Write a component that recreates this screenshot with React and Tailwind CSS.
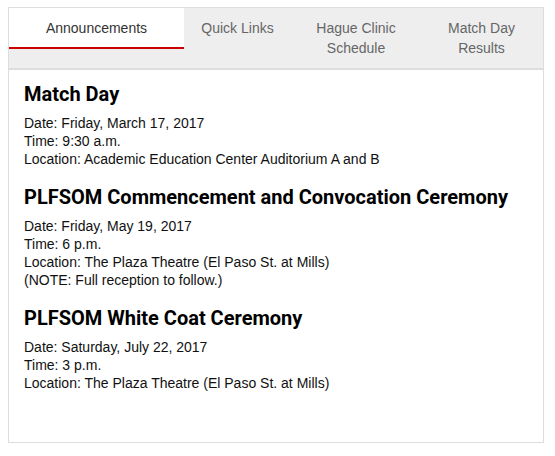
import React from "react";

const sections = [
  {
    title: "Match Day",
    lines: [
      "Date: Friday, March 17, 2017",
      "Time: 9:30 a.m.",
      "Location: Academic Education Center Auditorium A and B",
    ],
  },
  {
    title: "PLFSOM Commencement and Convocation Ceremony",
    lines: [
      "Date: Friday, May 19, 2017",
      "Time: 6 p.m.",
      "Location: The Plaza Theatre (El Paso St. at Mills)",
      "(NOTE: Full reception to follow.)",
    ],
  },
  {
    title: "PLFSOM White Coat Ceremony",
    lines: [
      "Date: Saturday, July 22, 2017",
      "Time: 3 p.m.",
      "Location: The Plaza Theatre (El Paso St. at Mills)",
    ],
  },
];

export default function App() {
  return (
    <div className="w-[555px] h-[456px] bg-white pt-[7px] pl-[8px] font-['Liberation_Sans',Arial,sans-serif]">
      <div className="w-[536px] h-[436px] border border-[#dddddd] flex flex-col">
        <div className="flex items-start bg-[#eeeeee] h-[62px] border-b-2 border-[#dddddd] text-[14px] leading-[20px] text-center">
          <div className="w-[175px] bg-white text-[#333333] pt-[10px] pb-[9px] border-b-2 border-[#cc0000]">
            Announcements
          </div>
          <div className="w-[107px] text-[#666666] pt-[10px] pb-[10px]">Quick Links</div>
          <div className="w-[130px] text-[#666666] pt-[10px] pb-[10px]">
            Hague Clinic
            <br />
            Schedule
          </div>
          <div className="w-[121px] text-[#666666] pt-[10px] pb-[10px]">
            Match Day
            <br />
            Results
          </div>
        </div>
        <div className="flex flex-col gap-[17px] pt-[12px] px-[15px] text-[#111111]">
          {sections.map((s) => (
            <div key={s.title}>
              <h2 className="font-['Roboto',Arial,sans-serif] text-[20px] leading-[24px] font-bold text-black mb-[8px]">
                {s.title}
              </h2>
              <div className="text-[14px] leading-[18px]">
                {s.lines.map((l) => (
                  <div key={l}>{l}</div>
                ))}
              </div>
            </div>
          ))}
        </div>
      </div>
    </div>
  );
}
